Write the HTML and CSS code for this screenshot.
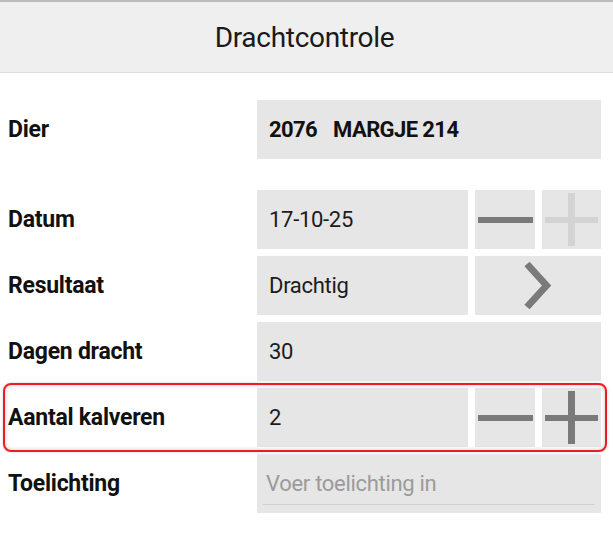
FILE: index.html
```html
<!DOCTYPE html>
<html lang="nl">
<head>
<meta charset="utf-8">
<title>Drachtcontrole</title>
<link rel="stylesheet" href="styles.css">
</head>
<body>
<header class="topbar">
  <h1 class="title">Drachtcontrole</h1>
</header>
<main class="form">
  <div class="row row-single row-dier">
    <div class="label">Dier</div>
    <div class="field field-wide bold"><span class="num">2076</span><span>MARGJE 214</span></div>
  </div>

  <div class="rows">
    <div class="row">
      <div class="label">Datum</div>
      <div class="field">17-10-25</div>
      <div class="btn">
        <svg viewBox="0 0 60 59" width="60" height="59"><rect x="3" y="27" width="55" height="6" class="ic"/></svg>
      </div>
      <div class="btn">
        <svg viewBox="0 0 59 59" width="59" height="59"><rect x="3" y="27" width="53" height="6" class="ic-off"/><rect x="26" y="3" width="7" height="53" class="ic-off"/></svg>
      </div>
    </div>

    <div class="row">
      <div class="label">Resultaat</div>
      <div class="field">Drachtig</div>
      <div class="btn btn-span">
        <svg viewBox="0 0 126 59" width="126" height="59"><polyline points="52,8 71.5,29.5 52,51" class="chev"/></svg>
      </div>
    </div>

    <div class="row">
      <div class="label">Dagen dracht</div>
      <div class="field field-wide">30</div>
    </div>

    <div class="row highlight">
      <div class="label">Aantal kalveren</div>
      <div class="field">2</div>
      <div class="btn">
        <svg viewBox="0 0 60 59" width="60" height="59"><rect x="3" y="27" width="55" height="6" class="ic"/></svg>
      </div>
      <div class="btn">
        <svg viewBox="0 0 59 59" width="59" height="59"><rect x="3" y="27" width="53" height="6" class="ic"/><rect x="26" y="3" width="7" height="53" class="ic"/></svg>
      </div>
    </div>

    <div class="row">
      <div class="label">Toelichting</div>
      <div class="field field-wide input"><span class="placeholder">Voer toelichting in</span></div>
    </div>
  </div>
</main>
</body>
</html>
```

FILE: styles.css
```css
* { box-sizing: border-box; }

html, body {
  margin: 0;
  padding: 0;
  background: #ffffff;
}

body {
  width: 613px;
  font-family: Roboto, "Noto Sans", sans-serif;
  color: #151515;
}

.topbar {
  border-top: 2px solid #bcbcbc;
  border-bottom: 1px solid #dcdcdc;
  background: #efefef;
  height: 73px;
  display: flex;
  align-items: center;
  justify-content: center;
}

.title {
  margin: 0;
  font-size: 28px;
  letter-spacing: -0.3px;
  font-weight: 400;
  color: #1a1a1a;
  transform: translateX(-2px);
}

.form {
  padding-top: 27px;
}

.rows {
  margin-top: 31px;
  display: flex;
  flex-direction: column;
  gap: 7px;
}

.row {
  position: relative;
  display: grid;
  grid-template-columns: 242px 211px 60px 59px;
  column-gap: 7px;
  padding-left: 8px;
  width: 601px;
  height: 59px;
  align-items: stretch;
}

.label {
  display: flex;
  align-items: center;
  font-size: 23px;
  letter-spacing: -0.25px;
  font-weight: 700;
  color: #111;
}

.field {
  background: #e6e6e6;
  display: flex;
  align-items: center;
  padding-left: 12px;
  font-size: 22px;
  letter-spacing: -0.3px;
  color: #1c1c1c;
}

.field-wide {
  grid-column: 2 / 5;
}

.bold {
  font-weight: 700;
  letter-spacing: -0.6px;
  color: #111;
}

.num {
  margin-right: 16px;
}

.btn {
  background: #e6e6e6;
  display: flex;
  align-items: center;
  justify-content: center;
}

.btn svg { display: block; }

.btn-span {
  grid-column: 3 / 5;
}

.ic { fill: #7a7a7a; }
.ic-off { fill: #d3d3d3; }

.chev {
  fill: none;
  stroke: #7a7a7a;
  stroke-width: 7;
  stroke-linejoin: miter;
}

.input {
  position: relative;
  padding-left: 9px;
}

.input::after {
  content: "";
  position: absolute;
  left: 6px;
  right: 6px;
  bottom: 8px;
  height: 1px;
  background: #cfcfcf;
}

.placeholder {
  color: #9b9b9b;
  font-weight: 400;
}

.highlight::after {
  content: "";
  position: absolute;
  top: -5px;
  bottom: -5px;
  left: 3px;
  right: -6px;
  border: 2px solid #ec1c24;
  border-radius: 8px;
  box-shadow: inset 0 0 4px rgba(0, 0, 0, 0.22), 0 0 3px rgba(0, 0, 0, 0.18);
  pointer-events: none;
}
```
